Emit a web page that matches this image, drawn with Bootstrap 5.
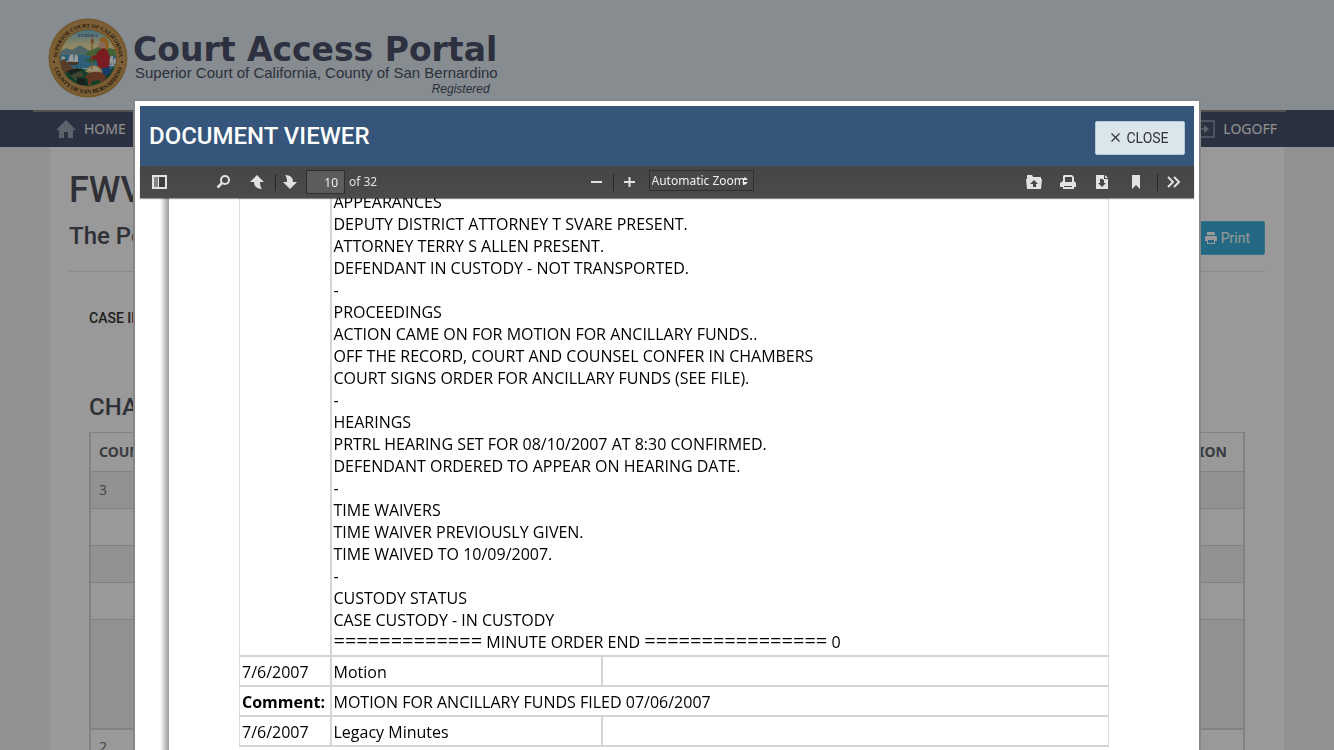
<!DOCTYPE html>
<html lang="en">
<head>
<meta charset="utf-8">
<meta name="viewport" content="width=device-width, initial-scale=1">
<title>Court Access Portal</title>
<link href="https://cdn.jsdelivr.net/npm/bootstrap@5.3.0/dist/css/bootstrap.min.css" rel="stylesheet">
<style>
  html, body { height: 100%; }
  body { background: #f2f2f2; font-family: "Noto Sans", sans-serif; font-size: 14px; line-height: 20px; color: #333; overflow: hidden; }
  h1, h2, h3, .ui-font { font-family: Roboto, sans-serif; font-weight: 500; margin: 0; }

  /* Site header */
  .site-header { background: #dfe9ef; height: 110px; padding: 18px 48px 0; }
  .seal { width: 80px; height: 80px; margin-right: 5px; }
  .brand-text { padding-top: 14px; color: #4a5169; }
  .brand-title { font: 700 33px/36px "DejaVu Sans", sans-serif; }
  .brand-court { font: 15px/14px "Liberation Sans", sans-serif; margin-top: -2px; padding-left: 2px; }
  .brand-status { font: italic 12px/18px "Liberation Sans", sans-serif; padding-right: 8px; text-align: right; }
  .site-nav { background: #49536b; height: 37px; position: relative; padding: 0 57px 0 56px; }
  .site-nav::before { content: ""; position: absolute; top: 0; left: 33px; right: 48px; height: 2px; background: #8c8982; }
  .site-nav a { color: #f2f2f2; text-decoration: none; gap: 8px; }

  /* Case page */
  .case-page { background: #fff; margin: 0 50px; padding: 20px 19px 0; min-height: 700px; }
  .case-number { font-size: 36px; line-height: 46px; color: #50535c; }
  .case-title { font-size: 24px; line-height: 30px; color: #50535c; padding-top: 8px; }
  .case-head { height: 105px; border-bottom: 1px solid #e6e6e6; }
  .btn-print { background: #3bafda; color: #fff; font-family: Roboto, sans-serif; font-size: 14px; height: 34px; border: 1px solid #5fbfe2; border-radius: 2px; padding: 0 14px; }
  .case-body { padding: 36px 20px 0; }
  .case-tab { font-size: 14px; line-height: 20px; color: #333; }
  .charges-title { font-size: 24px; line-height: 30px; color: #50535c; margin: 64px 0 10px; }
  .charges { width: 100%; border: 1px solid #ddd; border-right-width: 2px; border-left-width: 2px; border-color: #d8d8d8; color: #777; }
  .charges th, .charges td { height: 37px; border: 0 solid #d8d8d8; border-top-width: 1px; padding: 0 8px; font-size: 14px; line-height: 20px; }
  .charges th { height: 39px; color: #60646b; font-weight: 700; }
  .charges tbody tr:nth-child(odd) td { background: #f4f4f4; }
  .charges .tall td { height: 109px; }
  .charges .last td { background: #fff; border-top-width: 2px; }

  /* Document viewer */
  .shade { position: fixed; inset: 0; background: rgba(0,0,0,.4); }
  .viewer-wrap { position: fixed; inset: 101px 135px 0; }
  .viewer { height: 100%; background: #fff; padding: 5px 5px 0; box-shadow: 0 0 0 2px #868686; }
  .viewer-head { height: 60px; background: #35557a; padding: 0 9px; }
  .viewer-head h2 { color: #fff; font-size: 24px; line-height: 30px; }
  .btn-closer { background: #dbe6ec; color: #333; border: 1px solid #b5c9d6; border-radius: 2px; font-family: Roboto, sans-serif; font-size: 14px; height: 34px; width: 90px; margin-top: 3px; gap: 6px; }
  .toolbar { height: 32px; background: linear-gradient(#454545, #4b4b4b); box-shadow: 0 1px 1px rgba(0,0,0,.4); color: #e2e2e2; font-size: 12px; position: relative; z-index: 1; }
  .tool { background: none; border: 0; padding: 0; width: 16px; height: 16px; display: flex; color: #e2e2e2; }
  .divider { width: 1px; height: 17px; background: #262626; }
  .page-no { width: 39px; height: 24px; background: #5c5c5c; border: 1px solid #2f2f2f; color: #f0f0f0; font-size: 12px; text-align: right; padding: 0 6px; margin: 0 4px 0 5px; }
  .zoom-select { width: 105px; height: 21px; appearance: none; border: 1px solid #303030; color: #f0f0f0; font-size: 12px; line-height: 16px; padding: 0 2px; margin: 0 0 3px 3px;
    background: #484848 url("data:image/svg+xml,%3Csvg xmlns='http://www.w3.org/2000/svg' width='6' height='8' fill='%23eee'%3E%3Cpath d='M3 0l3 3H0zM0 5h6L3 8z'/%3E%3C/svg%3E") no-repeat right 5px center; }
  .tools-side { flex: 1 1 0; padding: 0 12px; }
  .step-tools { margin-left: 17px; gap: 6px; }
  .tools-mid { margin-left: 8px; }
  .file-tools { gap: 18px; margin-right: 13px; }
  .sheet-area { flex: 1; min-height: 0; overflow: hidden; }
  .sheet { padding: 0 85px 0 70px; }
  .sheet-edge { width: 9px; margin-left: 20px; background: linear-gradient(to right, #fff, #9a9a9a); }
  .minutes { width: 100%; table-layout: fixed; border-collapse: collapse; color: #000; font: 16px/22px "Open Sans", sans-serif; border: 1px solid #ddd; }
  .col-date { width: 91px; }
  .col-event { width: 271px; }
  .minutes td, .minutes th { border: 2px solid #d5d5d5; padding: 4px 2px 2px; height: 30px; white-space: nowrap; line-height: 22px; }
  .minutes td:first-child, .minutes th:first-child { border-left: 1px solid #ddd; }
  .minutes td:last-child { border-right: 1px solid #ddd; }
  .minutes .entry td { padding: 0 2px 2px; border-top: 0; vertical-align: bottom; }
  .entry-clip { margin-top: -8px; }
  .rule-text { font-size: 20px; line-height: 16px; }
</style>
</head>
<body>
<header class="site-header d-flex">
  <svg class="seal flex-shrink-0" viewBox="0 0 80 80" role="img" aria-label="Court seal">
    <defs>
      <clipPath id="disc"><circle cx="40" cy="40" r="28"/></clipPath>
      <path id="arcTop" d="M9.700 47a31 31 0 1 1 60.600 0"/>
      <path id="arcBottom" d="M4.500 40a35.500 35.500 0 0 0 71 0"/>
      <linearGradient id="sky" x1="0" y1="0" x2="0" y2="1"><stop offset="0" stop-color="#65b8d8"/><stop offset=".3" stop-color="#f3e3a2"/><stop offset=".5" stop-color="#e8dc98"/></linearGradient>
    </defs>
    <circle cx="40" cy="40" r="39.500" fill="#c4924a"/>
    <circle cx="40" cy="40" r="38" fill="#cf9f5a"/>
    <circle cx="40" cy="40" r="29" fill="#b98639"/>
    <g clip-path="url(#disc)">
      <path fill="url(#sky)" d="M10 10h60v60H10z"/>
      <path fill="#83a9ac" d="M10 35l8-5 6 2 8-5 8 5 10 1 12-3 10 4v9H10z"/>
      <path fill="#6ea35a" d="M38 35l12-6 22 3v9H38z"/>
      <path fill="#4ba0c9" d="M10 37h26l14 3 22-3v28H10z"/>
      <path fill="#c8e4e8" d="M10 43h14l8 2H16zM55 44h16v2H58zM26 50h14v1H24z"/>
      <path fill="#4a8f5b" d="M36 42l12-4 4 4-8 3z"/>
      <path fill="#fff" d="M22 37l3-1 1 7h-6zM27 36l3 2v6h-4zM14 38l3 1v5h-4zM61 39l4-1v6h-5zM66 40l2 1v4h-3zM60 47l6-1v2h-6z"/>
      <path fill="#7a5a3b" d="M19 44h12l-2 3h-8z"/>
      <path fill="#926542" d="M10 43l7-2 4 6 7 5-2 12-12-5z"/>
      <path fill="#1d6841" d="M17 55l16-5 12 7 15-2 5-6 6 8-12 13H22z"/>
      <path fill="#6b7352" d="M22 57l10-5 4 5-8 6z"/>
      <path fill="#253a2e" d="M29 59l8 2 3 6-11 1zM19 53l10-3 5 2-11 5z"/>
      <path fill="#2a63ac" d="M48 48l12-4 3 10-9 7-14-1z"/>
      <path fill="#c83038" d="M50 33l5-3 4 2 3 7-1 10-10 2-3-10-4 1-2-3 6-2z"/>
      <path fill="#edcf7b" d="M37 54q5-9 12-6t5 9z"/>
      <path fill="#fff3cf" d="M39 53q5-6 9-4t3 5z"/>
      <path fill="#a25b39" d="M37 60q1-5 8-6 10-1 13 5l-2 7h-3l-2-4-7 1-1 4h-3v-6z"/>
      <circle cx="54" cy="27" r="3.500" fill="#e6b08f"/>
      <path fill="#ed9a32" d="M51 23q3-6 7-3 4 4 2 12l-3-1 1-5-5-3z"/>
      <path stroke="#bb853d" stroke-width="1" d="M44 23v29"/>
      <path fill="#b46c35" d="M44 19l2 5-2 2-1-3z"/>
    </g>
    <g font-family="Liberation Serif, serif" font-weight="700" fill="#3c2a16">
      <text font-size="5.500" text-anchor="middle"><textPath href="#arcTop" startOffset="50%">SUPERIOR COURT OF CALIFORNIA</textPath></text>
      <text font-size="6" text-anchor="middle"><textPath href="#arcBottom" startOffset="50%">COUNTY OF SAN BERNARDINO</textPath></text>
      <text x="40" y="19" font-size="4.500" text-anchor="middle" fill="#465ba5">EUREKA</text>
    </g>
    <circle cx="6" cy="44" r="1" fill="#3c2a16"/><circle cx="74" cy="44" r="1" fill="#3c2a16"/>
  </svg>
  <div class="brand-text">
    <div class="brand-title">Court Access Portal</div>
    <div class="brand-court">Superior Court of California, County of San Bernardino</div>
    <div class="brand-status">Registered</div>
  </div>
</header>
<nav class="site-nav d-flex align-items-center justify-content-between">
  <a href="#" class="d-flex align-items-center">
    <svg width="20" height="18" viewBox="0 0 20 18" fill="#98a5b3"><path d="M10 0l10 10h-3v8h-5v-6H8v6H3v-8H0z"/></svg>HOME</a>
  <a href="#" class="d-flex align-items-center">
    <svg width="18" height="18" viewBox="0 0 18 18" fill="none" stroke="#98a5b3" stroke-width="2"><path d="M2 5V1h15v16H2v-4M2 9h8" opacity=".7"/><path fill="#98a5b3" stroke="none" d="M7 5l5 4-5 4z"/></svg>LOGOFF</a>
</nav>
<main class="case-page">
  <div class="case-head d-flex justify-content-between align-items-end">
    <div class="align-self-start"><h1 class="case-number">FWV</h1><h2 class="case-title">The Peo</h2></div>
    <button type="button" class="btn-print d-flex align-items-center gap-1 mb-3"><svg width="12" height="12" viewBox="0 0 12 12" fill="currentColor"><path fill-rule="evenodd" d="M2 0h7l1 1v2H2zM1 4h10l1 1v4h-2v3H2V9H0V5zM3 8v3h6V8z"/></svg>Print</button>
  </div>
  <div class="case-body">
    <div class="case-tab ui-font">CASE IN</div>
    <h2 class="charges-title">CHAR</h2>
    <table class="charges">
      <thead><tr><th>COUN</th><th class="text-end pe-3">ION</th></tr></thead>
      <tbody>
        <tr><td>3</td><td></td></tr>
        <tr><td></td><td></td></tr>
        <tr><td></td><td></td></tr>
        <tr><td></td><td></td></tr>
        <tr class="tall"><td></td><td></td></tr>
        <tr class="last"><td>2</td><td></td></tr>
      </tbody>
    </table>
  </div>
</main>
<div class="shade"></div>
<div class="viewer-wrap" role="dialog" aria-labelledby="viewerTitle">
  <div class="viewer d-flex flex-column">
    <div class="viewer-head d-flex align-items-center justify-content-between flex-shrink-0">
      <h2 id="viewerTitle">DOCUMENT VIEWER</h2>
      <button type="button" class="btn-closer d-flex align-items-center justify-content-center"><svg width="9" height="9" viewBox="0 0 9 9" stroke="currentColor" stroke-width="1.200"><path d="M.5.5l8 8m0-8l-8 8"/></svg>CLOSE</button>
    </div>
    <div class="toolbar d-flex align-items-center flex-shrink-0">
      <div class="tools-side d-flex align-items-center">
        <button class="tool me-5" type="button" aria-label="Toggle sidebar"><svg width="16" height="16" viewBox="0 0 16 16"><path fill="currentColor" d="M0 1h15v14H0z"/><path fill="#3f3f3f" d="M7 3h6v10H7z"/><path fill="#858585" d="M2 3h4v10H2z"/></svg></button>
        <button class="tool" type="button" aria-label="Find"><svg width="16" height="16" viewBox="0 0 16 16" fill="none" stroke="currentColor"><circle cx="9" cy="6" r="4" stroke-width="2"/><path stroke-width="2.500" d="M6 9l-4.500 4.500"/></svg></button>
        <div class="step-tools d-flex align-items-center">
        <button class="tool me-1" type="button" aria-label="Previous page"><svg width="16" height="16" viewBox="0 0 16 16" fill="currentColor"><path d="M8 1l7 7h-4q0 5 2 7-8 0-8-7H1z"/></svg></button>
        <span class="divider"></span>
        <button class="tool" type="button" aria-label="Next page"><svg width="16" height="16" viewBox="0 0 16 16" fill="currentColor"><path d="M8 15l7-7h-4q0-7-8-7 2 2 2 7H1z"/></svg></button>
        </div>
        <input class="page-no ms-2" aria-label="Page" value="10"><span>of 32</span>
      </div>
      <div class="tools-mid d-flex align-items-center gap-2">
        <button class="tool" type="button" aria-label="Zoom out"><svg width="16" height="16" viewBox="0 0 16 16"><path stroke="currentColor" stroke-width="2" d="M2 8h11"/></svg></button>
        <span class="divider"></span>
        <button class="tool" type="button" aria-label="Zoom in"><svg width="16" height="16" viewBox="0 0 16 16"><path stroke="currentColor" stroke-width="2" d="M2 8h11M7.500 3v10"/></svg></button>
        <select class="zoom-select" aria-label="Zoom"><option>Automatic Zoom</option></select>
      </div>
      <div class="tools-side d-flex align-items-center justify-content-end">
        <div class="file-tools d-flex">
        <button class="tool" type="button" aria-label="Open file"><svg width="16" height="16" viewBox="0 0 16 16" fill="currentColor"><path d="M1 1h5l1 2h8v2H1zM0 5h16l-1 10H1zM8 6L4 10h3v3h3v-3h2z" fill-rule="evenodd"/></svg></button>
        <button class="tool" type="button" aria-label="Print"><svg width="16" height="16" viewBox="0 0 16 16" fill="currentColor"><path fill-rule="evenodd" d="M4 1h8l2 2v4l2 2v4h-2v2H3v-2H0V9l3-2V2zM5 3v5h7V3zM4 12h8v1H4z"/></svg></button>
        <button class="tool" type="button" aria-label="Download"><svg width="16" height="16" viewBox="0 0 16 16" fill="currentColor"><path fill-rule="evenodd" d="M2 1h8v4h4v10H2zM6 5v4H4l4 4 4-4h-2V6H9V5z"/><path d="M11 1l3 3h-3z"/></svg></button>
        <button class="tool" type="button" aria-label="Bookmark"><svg width="16" height="16" viewBox="0 0 16 16" fill="currentColor"><path d="M4 1h8v14l-4-4-4 4z"/></svg></button>
        </div>
        <span class="divider"></span>
        <button class="tool ms-2" type="button" aria-label="Tools"><svg width="16" height="16" viewBox="0 0 16 16" fill="none" stroke="currentColor" stroke-width="2"><path d="M2 3l5 5-5 5M8 3l5 5-5 5"/></svg></button>
      </div>
    </div>
    <div class="sheet-area d-flex">
      <div class="sheet-edge flex-shrink-0"></div>
      <div class="sheet flex-grow-1">
        <table class="minutes">
          <colgroup><col class="col-date"><col class="col-event"><col></colgroup>
          <tbody>
            <tr class="entry"><td></td><td colspan="2"><div class="entry-clip">APPEARANCES<br>DEPUTY DISTRICT ATTORNEY T SVARE PRESENT.<br>ATTORNEY TERRY S ALLEN PRESENT.<br>DEFENDANT IN CUSTODY - NOT TRANSPORTED.<br>-<br>PROCEEDINGS<br>ACTION CAME ON FOR MOTION FOR ANCILLARY FUNDS..<br>OFF THE RECORD, COURT AND COUNSEL CONFER IN CHAMBERS<br>COURT SIGNS ORDER FOR ANCILLARY FUNDS (SEE FILE).<br>-<br>HEARINGS<br>PRTRL HEARING SET FOR 08/10/2007 AT 8:30 CONFIRMED.<br>DEFENDANT ORDERED TO APPEAR ON HEARING DATE.<br>-<br>TIME WAIVERS<br>TIME WAIVER PREVIOUSLY GIVEN.<br>TIME WAIVED TO 10/09/2007.<br>-<br>CUSTODY STATUS<br>CASE CUSTODY - IN CUSTODY<br><span class="rule-text">=============</span> MINUTE ORDER END <span class="rule-text">================</span> 0</div></td></tr>
            <tr><td>7/6/2007</td><td>Motion</td><td></td></tr>
            <tr><th scope="row">Comment:</th><td colspan="2">MOTION FOR ANCILLARY FUNDS FILED 07/06/2007</td></tr>
            <tr><td>7/6/2007</td><td>Legacy Minutes</td><td></td></tr>
          </tbody>
        </table>
      </div>
    </div>
  </div>
</div>
<script src="https://cdn.jsdelivr.net/npm/bootstrap@5.3.0/dist/js/bootstrap.bundle.min.js"></script>
</body>
</html>
